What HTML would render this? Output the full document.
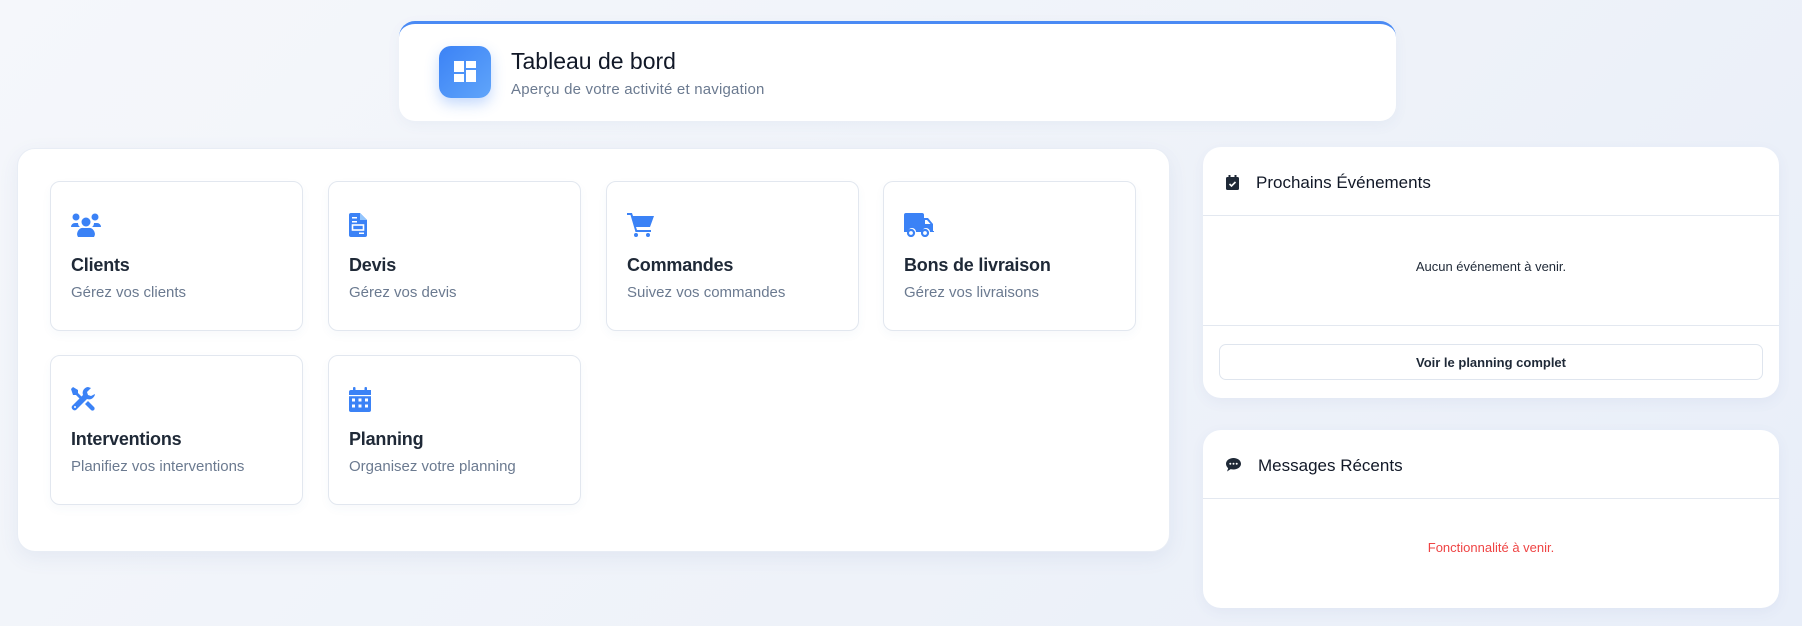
<!DOCTYPE html>
<html><head><meta charset="utf-8"><style>
*{box-sizing:border-box;margin:0;padding:0}
body{width:1802px;height:626px;overflow:hidden;font-family:"Liberation Sans",sans-serif;background:linear-gradient(135deg,#f5f7fb 0%,#eef2f9 60%,#e8eef9 100%);position:relative}
.hdr{position:absolute;left:399px;top:21px;width:997px;height:100px;background:#fff;border-radius:16px;border-top:3px solid #4a8af4;box-shadow:0 4px 14px rgba(60,90,150,.05)}
.hicon{position:absolute;left:40px;top:22px;width:52px;height:52px;border-radius:12px;background:linear-gradient(135deg,#3b82f6,#60a5fa);box-shadow:0 6px 14px rgba(59,130,246,.3)}
.htitle{position:absolute;left:112px;top:24px;font-size:23px;color:#111827;font-weight:500}
.hsub{position:absolute;left:112px;top:57px;font-size:15px;color:#6b7a90;letter-spacing:.2px}
.main{position:absolute;left:17px;top:148px;width:1153px;height:404px;background:#fff;border-radius:18px;box-shadow:0 6px 20px rgba(60,90,150,.08);border:1px solid #e8edf5}
.tile{position:absolute;width:253px;height:150px;background:#fff;border:1px solid #e2e7ef;border-radius:10px;box-shadow:0 4px 10px rgba(60,90,150,.04)}
.tile svg{position:absolute;left:20px;top:31px}
.tile .t{position:absolute;left:20px;top:73px;font-size:18px;font-weight:bold;color:#1f2937;letter-spacing:-.2px}
.tile .s{position:absolute;left:20px;top:102px;font-size:15px;color:#6b7a90}
.panel{position:absolute;left:1203px;width:576px;background:#fff;border-radius:18px;box-shadow:0 4px 14px rgba(60,90,150,.06)}
.ph{height:69px;border-bottom:1px solid #e3e8f0;position:relative}
.ph .pt{position:absolute;left:53px;top:26px;font-size:17px;color:#111827}
.ph svg{position:absolute;left:23px;top:28px}
</style></head><body>
<div class="hdr">
 <div class="hicon"><svg width="52" height="52" viewBox="0 0 52 52"><rect x="15" y="15" width="10" height="11" fill="#fff"/><rect x="27" y="15" width="10" height="7" fill="#fff"/><rect x="15" y="28" width="10" height="8" fill="#fff"/><rect x="27" y="24" width="10" height="12" fill="#fff"/></svg></div>
 <div class="htitle">Tableau de bord</div>
 <div class="hsub">Aperçu de votre activité et navigation</div>
</div>
<div class="main">
 <div class="tile" style="left:32px;top:32px">
  <svg width="30" height="24" viewBox="0 0 30 24" fill="#3b82f6"><circle cx="5" cy="4" r="3.5"/><circle cx="24" cy="4" r="3.5"/><circle cx="15" cy="9" r="4.5"/><path d="M0 14a4 4 0 0 1 4-4h3a5 5 0 0 0 2 4H0z"/><path d="M30 14a4 4 0 0 0-4-4h-3a5 5 0 0 1-2 4h9z"/><path d="M7 24a6 6 0 0 1 6-9h4a6 6 0 0 1 6 9z"/></svg>
  <div class="t">Clients</div><div class="s">Gérez vos clients</div></div>
 <div class="tile" style="left:310px;top:32px">
  <svg width="18" height="24" viewBox="0 0 18 24" fill="#3b82f6"><path d="M2 0h9l7 7v15a2 2 0 0 1-2 2H2a2 2 0 0 1-2-2V2a2 2 0 0 1 2-2z"/><path d="M11 0v7h7" fill="#93c5fd"/><rect x="3" y="4" width="5" height="1.5" fill="#fff"/><rect x="3" y="8" width="5" height="1.5" fill="#fff"/><rect x="3.5" y="12" width="11" height="5" fill="none" stroke="#fff" stroke-width="1.6"/><rect x="10" y="19.5" width="5" height="1.5" fill="#fff"/></svg>
  <div class="t">Devis</div><div class="s">Gérez vos devis</div></div>
 <div class="tile" style="left:588px;top:32px">
  <svg width="28" height="24" viewBox="0 0 28 24" fill="#3b82f6"><path d="M0 0h5l1 3h21l-4 11H9l1 3h14v2H8.5L3.5 2H0z"/><circle cx="9" cy="22" r="2"/><circle cx="21" cy="22" r="2"/></svg>
  <div class="t">Commandes</div><div class="s">Suivez vos commandes</div></div>
 <div class="tile" style="left:865px;top:32px">
  <svg width="30" height="24" viewBox="0 0 30 24" fill="#3b82f6"><path d="M2 0h16a2 2 0 0 1 2 2v3h4l5 6v7h1v1h-4a4 4 0 0 0-8 0h-6a4 4 0 0 0-8 0H0V2a2 2 0 0 1 2-2z"/><circle cx="7" cy="20" r="3" fill="none" stroke="#3b82f6" stroke-width="2.2"/><circle cx="21" cy="20" r="3" fill="none" stroke="#3b82f6" stroke-width="2.2"/><path d="M21 7h2l3.5 4H21z" fill="#fff"/></svg>
  <div class="t">Bons de livraison</div><div class="s">Gérez vos livraisons</div></div>
 <div class="tile" style="left:32px;top:206px">
  <svg width="24" height="24" viewBox="0 0 24 24" fill="#3b82f6"><path d="M2 0l5 3v3l6 6-2 2-6-6H2L0 2z"/><path d="M17 0a6 6 0 0 0-5 8L1 19a3 3 0 0 0 4 4l11-11a6 6 0 0 0 8-5l-4 2-3-1-1-3 4-4z"/><path d="M14 17l3-3 6 6a2 2 0 0 1-3 3z"/><circle cx="4" cy="20" r="1" fill="#fff"/></svg>
  <div class="t">Interventions</div><div class="s">Planifiez vos interventions</div></div>
 <div class="tile" style="left:310px;top:206px">
  <svg width="22" height="25" viewBox="0 0 22 25" fill="#3b82f6"><rect x="4" y="0" width="2.5" height="5" rx="1"/><rect x="15.5" y="0" width="2.5" height="5" rx="1"/><path d="M2 3h20v20a2 2 0 0 1-2 2H2a2 2 0 0 1-2-2V5a2 2 0 0 1 2-2z"/><g fill="#fff"><rect x="0" y="8" width="22" height="1.2"/><rect x="3" y="11.5" width="3" height="3"/><rect x="9.5" y="11.5" width="3" height="3"/><rect x="16" y="11.5" width="3" height="3"/><rect x="3" y="17.5" width="3" height="3"/><rect x="9.5" y="17.5" width="3" height="3"/><rect x="16" y="17.5" width="3" height="3"/></g></svg>
  <div class="t">Planning</div><div class="s">Organisez votre planning</div></div>
</div>
<div class="panel" style="top:147px;height:251px">
 <div class="ph"><svg width="13" height="15" viewBox="0 0 13 15" fill="#1f2937"><rect x="2.5" y="0" width="2" height="3"/><rect x="8.5" y="0" width="2" height="3"/><rect x="0" y="2" width="13" height="13" rx="1.5"/><path d="M3.5 9l2 2 4-4" fill="none" stroke="#fff" stroke-width="1.6"/></svg><div class="pt">Prochains Événements</div></div>
 <div style="height:110px;border-bottom:1px solid #e3e8f0;text-align:center;padding-top:43px;font-size:13px;color:#1f2937">Aucun événement à venir.</div>
 <div style="position:absolute;left:16px;top:197px;width:544px;height:36px;border:1px solid #dfe5ee;border-radius:7px;text-align:center;line-height:35px;font-size:13px;font-weight:bold;color:#1f2937">Voir le planning complet</div>
</div>
<div class="panel" style="top:430px;height:178px">
 <div class="ph" style="height:69px"><svg width="15" height="14" viewBox="0 0 15 14" fill="#1f2937"><path d="M7.5 0C11.6 0 15 2.5 15 5.8s-3.4 5.7-7.5 5.7c-1 0-2-.1-2.8-.4L1 13.5l1.2-3.3C.8 9.1 0 7.5 0 5.8 0 2.5 3.4 0 7.5 0z"/><circle cx="4.3" cy="5.8" r="1" fill="#fff"/><circle cx="7.5" cy="5.8" r="1" fill="#fff"/><circle cx="10.7" cy="5.8" r="1" fill="#fff"/></svg><div class="pt" style="left:55px">Messages Récents</div></div>
 <div style="text-align:center;padding-top:41px;font-size:13px;color:#ef4444">Fonctionnalité à venir.</div>
</div>
</body></html>
